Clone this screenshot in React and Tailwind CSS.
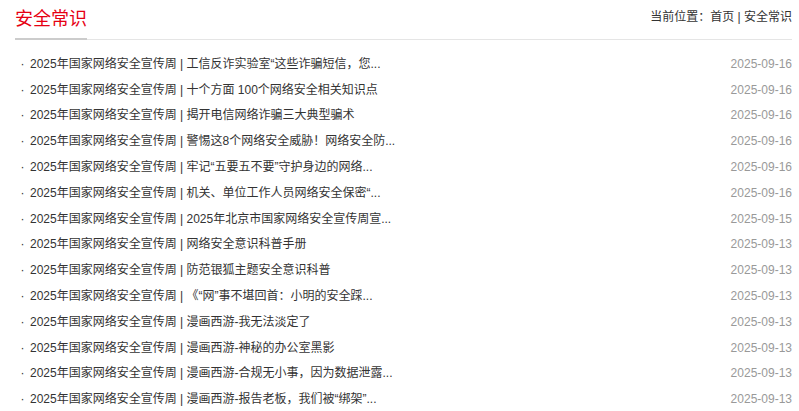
import React from "react";

const items = [
  ["工信反诈实验室“这些诈骗短信，您...", "2025-09-16"],
  ["十个方面 100个网络安全相关知识点", "2025-09-16"],
  ["揭开电信网络诈骗三大典型骗术", "2025-09-16"],
  ["警惕这8个网络安全威胁！网络安全防...", "2025-09-16"],
  ["牢记“五要五不要”守护身边的网络...", "2025-09-16"],
  ["机关、单位工作人员网络安全保密“...", "2025-09-16"],
  ["2025年北京市国家网络安全宣传周宣...", "2025-09-15"],
  ["网络安全意识科普手册", "2025-09-13"],
  ["防范银狐主题安全意识科普", "2025-09-13"],
  ["《“网”事不堪回首：小明的安全踩...", "2025-09-13"],
  ["漫画西游-我无法淡定了", "2025-09-13"],
  ["漫画西游-神秘的办公室黑影", "2025-09-13"],
  ["漫画西游-合规无小事，因为数据泄露...", "2025-09-13"],
  ["漫画西游-报告老板，我们被“绑架”...", "2025-09-13"],
];

export default function App() {
  return (
    <div
      className="w-[799px] h-[411px] bg-white pl-[15px] pr-[7px] overflow-hidden"
      style={{ fontFamily: '"Liberation Sans", "Noto Sans CJK SC", sans-serif' }}
    >
      <div className="flex justify-between h-[40px] border-b border-[#e5e5e5]">
        <div className="flex items-center text-[18px] text-[#e60012] border-b-2 border-[#cccccc] -mb-px pt-[1px]">
          安全常识
        </div>
        <div className="flex items-center text-[12px] text-[#333] pb-[5px]">
          当前位置：首页 | 安全常识
        </div>
      </div>
      <ul className="mt-[11px]">
        {items.map(([t, d], i) => (
          <li key={i} className="flex justify-between items-center h-[25.8px] text-[12px]">
            <span className="text-[#333] whitespace-nowrap">
              <span className="inline-block w-[15px] text-center">·</span>
              2025年国家网络安全宣传周 | {t}
            </span>
            <span className="text-[#999]">{d}</span>
          </li>
        ))}
      </ul>
    </div>
  );
}
